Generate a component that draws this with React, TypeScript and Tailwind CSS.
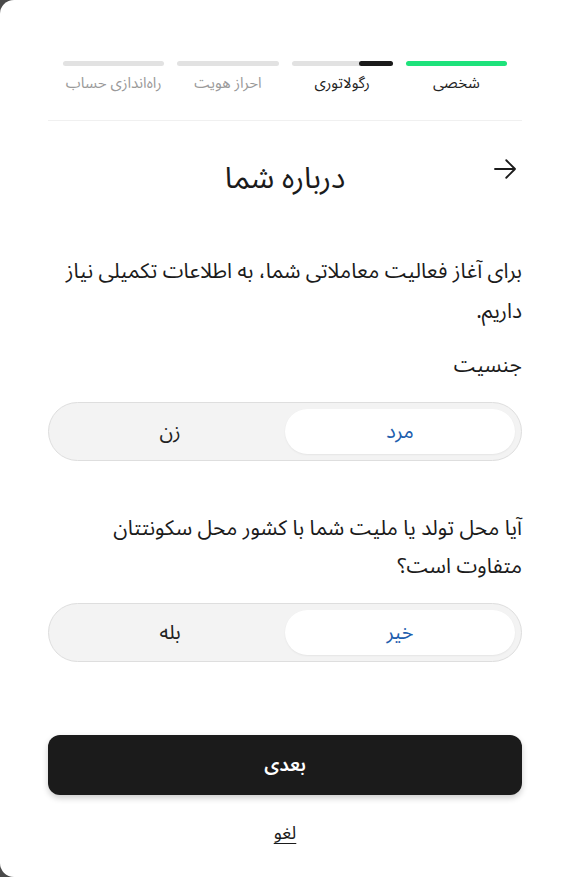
import { useState } from 'react'

const font = { fontFamily: '"Noto Sans Arabic", "Vazirmatn", "DejaVu Sans", sans-serif' }

const steps = [
  { label: 'شخصی', fill: 'full' },
  { label: 'رگولاتوری', fill: 'third' },
  { label: 'احراز هویت', fill: 'none' },
  { label: 'راه‌اندازی حساب', fill: 'none' },
]

function StepBar({ fill }: { fill: string }) {
  if (fill === 'full') return <div className="h-[5px] w-full rounded-full bg-[#1ee27b]" />
  return (
    <div className="h-[5px] w-full rounded-full bg-[#e2e2e2] flex">
      {fill === 'third' && <div className="h-full w-1/3 rounded-full bg-[#1b1b1b]" />}
    </div>
  )
}

function Segmented({ options, value, onChange }: { options: string[]; value: string; onChange: (v: string) => void }) {
  return (
    <div className="h-[59px] rounded-full bg-[#f3f3f3] border border-[#dedede] p-[6px] grid grid-cols-2">
      {options.map((o) => (
        <button
          key={o}
          onClick={() => onChange(o)}
          className={
            'rounded-full text-[20px] ' +
            (value === o ? 'bg-white text-[#1f5fae] shadow-[0_1px_2px_rgba(0,0,0,0.06)]' : 'text-[#222]')
          }
        >
          {o}
        </button>
      ))}
    </div>
  )
}

export default function App() {
  const [gender, setGender] = useState('مرد')
  const [diff, setDiff] = useState('خیر')

  return (
    <div className="bg-[#4a4a4a] min-h-[877px]" style={font}>
      <div dir="rtl" className="bg-white min-h-[877px] rounded-l-[14px] flex flex-col pl-[48px] pr-[45px]">
        <div className="pt-[61px] px-[15px] grid grid-cols-4 gap-[13px]">
          {steps.map((s, i) => (
            <div key={s.label} className="flex flex-col items-center">
              <StepBar fill={s.fill} />
              <span className={'mt-[6px] text-[15px] leading-[22px] ' + (i < 2 ? 'text-[#222]' : 'text-[#9a9a9a]')}>
                {s.label}
              </span>
            </div>
          ))}
        </div>
        <div className="mt-[26px] border-t border-[#f0f0f0]" />

        <div className="relative mt-[38px] flex justify-center items-center h-[40px]">
          <h1 className="text-[30px] text-[#1b1b1b] leading-[40px]">درباره شما</h1>
          <svg className="absolute right-[2px] top-[-5px]" width="30" height="30" viewBox="0 0 24 24" fill="none" stroke="#1b1b1b" strokeWidth="1.5" strokeLinecap="round" strokeLinejoin="round">
            <path d="M4 12h16M13 5l7 7-7 7" />
          </svg>
        </div>

        <p className="mt-[52px] text-[21px] leading-[40px] text-[#1b1b1b]">
          برای آغاز فعالیت معاملاتی شما، به اطلاعات تکمیلی نیاز داریم.
        </p>

        <p className="mt-[20px] text-[21px] leading-[28px] text-[#1b1b1b]">جنسیت</p>
        <div className="mt-[23px]">
          <Segmented options={['مرد', 'زن']} value={gender} onChange={setGender} />
        </div>

        <p className="mt-[48px] text-[21px] leading-[38px] text-[#1b1b1b] pl-[40px]">
          آیا محل تولد یا ملیت شما با کشور محل سکونتتان متفاوت است؟
        </p>
        <div className="mt-[18px]">
          <Segmented options={['خیر', 'بله']} value={diff} onChange={setDiff} />
        </div>

        <button className="mt-[73px] h-[60px] rounded-[12px] bg-[#1b1b1b] text-white text-[19px] font-semibold shadow-[0_3px_6px_rgba(0,0,0,0.2)]">
          بعدی
        </button>
        <button className="mt-[26px] self-center text-[18px] leading-[24px] text-[#1b1b1b] underline underline-offset-4">لغو</button>
      </div>
    </div>
  )
}
